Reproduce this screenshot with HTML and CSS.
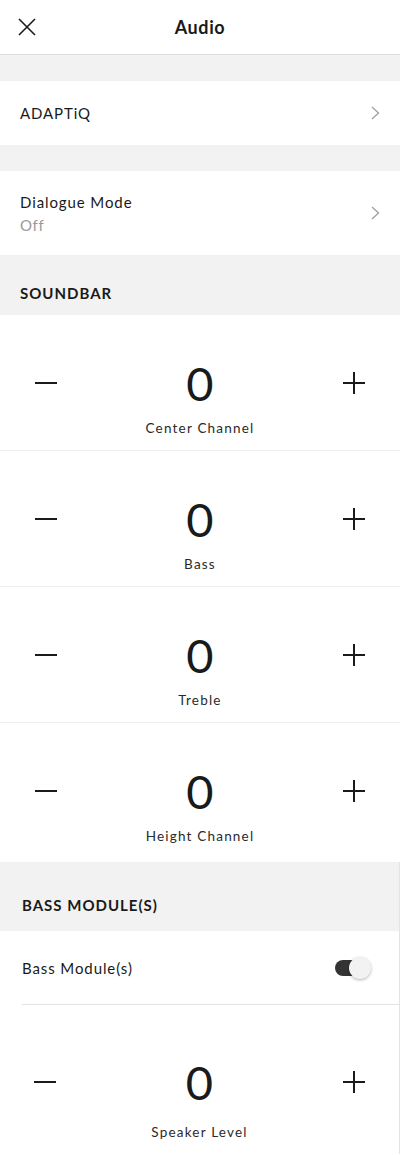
FILE: index.html
```html
<!DOCTYPE html>
<html lang="en">
<head>
    <meta charset="UTF-8">
    <meta name="viewport" content="width=device-width, initial-scale=1.0">
    <title>Audio</title>
    <link rel="stylesheet" href="styles.css">
</head>
<body>
    <header class="topbar">
        <button class="close-btn" aria-label="Close">
            <svg width="18" height="18" viewBox="0 0 18 18"><path d="M1 1L17 17M17 1L1 17" stroke="#1a1a1a" stroke-width="1.6" fill="none"/></svg>
        </button>
        <h1>Audio</h1>
        <span></span>
    </header>

    <div class="spacer"></div>
    <div class="row row-link adaptiq">
        <span class="row-title">ADAPTiQ</span>
        <svg class="chevron" width="9" height="14" viewBox="0 0 9 14"><path d="M1 1L7.5 7L1 13" stroke="#a0a0a0" stroke-width="1.3" fill="none"/></svg>
    </div>

    <div class="spacer"></div>
    <div class="row row-link dialogue">
        <div>
            <div class="row-title">Dialogue Mode</div>
            <div class="row-sub">Off</div>
        </div>
        <svg class="chevron" width="9" height="14" viewBox="0 0 9 14"><path d="M1 1L7.5 7L1 13" stroke="#a0a0a0" stroke-width="1.3" fill="none"/></svg>
    </div>

    <div class="section-head">SOUNDBAR</div>

    <div class="stepper">
        <span class="step minus"></span>
        <div class="step-center"><div class="step-value">0</div><div class="step-label">Center Channel</div></div>
        <span class="step plus"></span>
    </div>
    <div class="stepper">
        <span class="step minus"></span>
        <div class="step-center"><div class="step-value">0</div><div class="step-label">Bass</div></div>
        <span class="step plus"></span>
    </div>
    <div class="stepper">
        <span class="step minus"></span>
        <div class="step-center"><div class="step-value">0</div><div class="step-label">Treble</div></div>
        <span class="step plus"></span>
    </div>
    <div class="stepper last">
        <span class="step minus"></span>
        <div class="step-center"><div class="step-value">0</div><div class="step-label">Height Channel</div></div>
        <span class="step plus"></span>
    </div>

    <div class="lower">
        <div class="section-head bass-head">BASS MODULE(S)</div>
        <div class="row toggle-row">
            <span class="row-title">Bass Module(s)</span>
            <span class="toggle"><span class="knob"></span></span>
        </div>
        <div class="stepper speaker">
            <span class="step minus"></span>
            <div class="step-center"><div class="step-value">0</div><div class="step-label">Speaker Level</div></div>
            <span class="step plus"></span>
        </div>
    </div>
</body>
</html>
```

FILE: styles.css
```css
body {
    margin: 0;
    background-color: #fff;
    font-family: 'Lato', 'Liberation Sans', sans-serif;
    color: #1a1a1a;
    width: 400px;
}

.topbar {
    height: 54px;
    display: grid;
    grid-template-columns: 54px 1fr 54px;
    align-items: center;
    border-bottom: 1px solid #dedede;
}

.close-btn {
    background: none;
    border: none;
    padding: 0 0 0 18px;
    display: flex;
    align-items: center;
    height: 54px;
}

.topbar h1 {
    margin: 0;
    text-align: center;
    font-size: 18px;
    font-weight: 700;
    letter-spacing: 0.6px;
}

.spacer {
    height: 26px;
    background-color: #f2f2f2;
}

.row {
    display: flex;
    align-items: center;
    justify-content: space-between;
    padding: 0 20px;
}

.row-title {
    font-size: 15px;
    letter-spacing: 0.9px;
}

.row-sub {
    font-size: 15px;
    color: #9a9a9a;
    letter-spacing: 0.6px;
    margin-top: 5px;
}

.adaptiq {
    height: 64px;
}

.dialogue {
    height: 84px;
}

.section-head {
    height: 60px;
    background-color: #f2f2f2;
    box-sizing: border-box;
    padding: 29px 20px 0;
    font-size: 15px;
    font-weight: 700;
    letter-spacing: 1px;
}

.stepper {
    display: grid;
    grid-template-columns: 92px 1fr 92px;
    align-items: start;
    height: 136px;
    box-sizing: border-box;
    padding-top: 46px;
    border-bottom: 1px solid #efefef;
}

.stepper.last {
    height: 139px;
    border-bottom: none;
}

.step-center {
    text-align: center;
}

.step-value {
    font-size: 47px;
    line-height: 44px;
    font-weight: 400;
}

.step-label {
    margin-top: 14px;
    font-size: 13.5px;
    line-height: 18px;
    letter-spacing: 1.2px;
    color: #2a2a2a;
}

.step {
    position: relative;
    height: 44px;
    justify-self: center;
    width: 22px;
}

.step::before,
.step::after {
    content: "";
    position: absolute;
    background-color: #1a1a1a;
}

.minus::before {
    left: 0;
    right: 0;
    top: 21px;
    height: 2px;
}

.minus::after {
    display: none;
}

.plus::before {
    left: 0;
    right: 0;
    top: 21px;
    height: 2px;
}

.plus::after {
    left: 10px;
    width: 2px;
    top: 11px;
    height: 22px;
}

.lower {
    border-right: 1px solid #e4e4e4;
}

.bass-head {
    height: 69px;
    padding: 34px 22px 0;
}

.toggle-row {
    height: 74px;
    padding: 0 22px;
    position: relative;
}

.toggle-row::after {
    content: "";
    position: absolute;
    left: 22px;
    right: 0;
    bottom: 0;
    height: 1px;
    background-color: #e2e2e2;
}

.toggle {
    position: relative;
    width: 30px;
    height: 16px;
    border-radius: 8px;
    background-color: #333;
    margin-right: 12px;
}

.knob {
    position: absolute;
    left: 14px;
    top: -3px;
    width: 22px;
    height: 22px;
    border-radius: 50%;
    background-color: #f2f2f2;
    box-shadow: 0 1px 3px rgba(0, 0, 0, 0.3);
}

.stepper.speaker {
    height: 149px;
    padding-top: 55px;
    border-bottom: none;
    grid-template-columns: 90px 1fr 90px;
}

.speaker .step-label {
    margin-top: 19px;
}
```
